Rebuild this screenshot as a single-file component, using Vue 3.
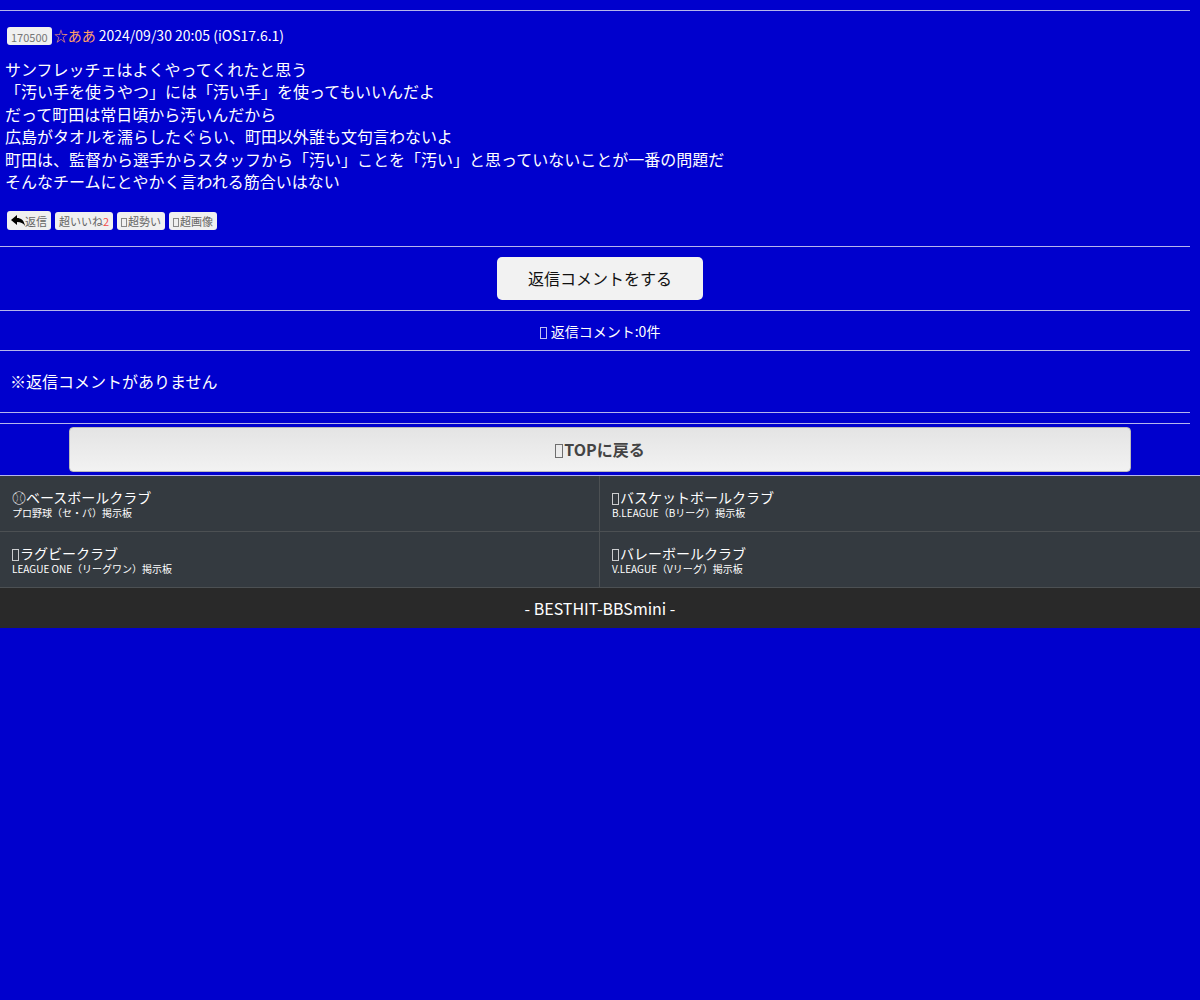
<script setup>
const lines = [
  'サンフレッチェはよくやってくれたと思う',
  '「汚い手を使うやつ」には「汚い手」を使ってもいいんだよ',
  'だって町田は常日頃から汚いんだから',
  '広島がタオルを濡らしたぐらい、町田以外誰も文句言わないよ',
  '町田は、監督から選手からスタッフから「汚い」ことを「汚い」と思っていないことが一番の問題だ',
  'そんなチームにとやかく言われる筋合いはない',
]
const clubs = [
  { icon: '⚾', name: 'ベースボールクラブ', note: 'プロ野球（セ・パ）掲示板' },
  { name: 'バスケットボールクラブ', note: 'B.LEAGUE（Bリーグ）掲示板' },
  { name: 'ラグビークラブ', note: 'LEAGUE ONE（リーグワン）掲示板' },
  { name: 'バレーボールクラブ', note: 'V.LEAGUE（Vリーグ）掲示板' },
]
</script>

<template>
  <div class="page">
    <main>
      <article class="post">
        <header class="meta">
          <a href="#" class="chip number">170500</a>
          <span><span class="author">☆ああ</span> 2024/09/30 20:05 (iOS17.6.1)</span>
        </header>
        <p class="text"><template v-for="(line, i) in lines" :key="i">{{ line }}<br></template></p>
        <div class="actions">
          <button type="button" class="chip reply">
            <svg viewBox="0 0 14 12" width="14" height="12" aria-hidden="true">
              <path d="M0 5 6 0V3C10 3 13 5 14 11C12 8 10 7 6 7V10Z" />
            </svg>返信
          </button>
          <button type="button" class="chip">超いいね<span class="count">2</span></button>
          <button type="button" class="chip"><i class="box small"></i>超勢い</button>
          <button type="button" class="chip"><i class="box small"></i>超画像</button>
        </div>
      </article>
      <section class="compose"><button type="button" class="comment">返信コメントをする</button></section>
      <h2 class="heading"><i class="box"></i> 返信コメント:0件</h2>
      <p class="empty">※返信コメントがありません</p>
      <div class="divider"></div>
    </main>
    <nav class="back"><a href="#" class="top"><i class="box large"></i>TOPに戻る</a></nav>
    <nav class="clubs">
      <a v-for="club in clubs" :key="club.name" href="#" class="club">
        <span class="name"><template v-if="club.icon">{{ club.icon }}</template><i v-else class="box"></i>{{ club.name }}</span>
        <span class="note">{{ club.note }}</span>
      </a>
    </nav>
    <footer class="footer">- BESTHIT-BBSmini -</footer>
  </div>
</template>

<style>
body {
  margin: 0;
  background: #0000cd;
}
</style>

<style scoped>
.page {
  color: #fff;
  font: 16px/24px "Noto Sans CJK JP", sans-serif;
}
.page * {
  box-sizing: border-box;
}
a {
  color: inherit;
  text-decoration: none;
}
button {
  font-family: inherit;
}
main {
  padding-top: 10px;
  margin-right: 10px;
}
.post,
.compose,
.heading,
.empty,
.divider {
  border-top: 1px solid #b5b5ec;
}
.post {
  padding: 14px 5px 16px;
}
.meta {
  display: flex;
  align-items: flex-end;
  gap: 2px;
  height: 20px;
  padding-left: 2px;
  font-size: 14px;
  line-height: 20px;
}
.author {
  color: #ffa066;
}
.chip {
  height: 18px;
  padding: 0 4px;
  border: 0;
  border-radius: 3px;
  background: #f0f0f0;
  color: #666;
  font-size: 11px;
  line-height: 18px;
}
.number {
  color: #777;
  line-height: 20px;
}
.box {
  display: inline-block;
  width: 7px;
  height: 12px;
  margin-right: 1px;
  border: 1px solid;
  vertical-align: -2px;
  opacity: 0.75;
}
.small {
  width: 6px;
  height: 9px;
  vertical-align: -1px;
}
.large {
  width: 8px;
  height: 14px;
}
.text {
  margin: 13px 0 19px;
  line-height: 1.4;
}
.actions {
  display: flex;
  align-items: flex-end;
  gap: 4px;
  padding-left: 2px;
}
.reply {
  display: flex;
  align-items: center;
  height: 19px;
}
.reply svg {
  fill: #000;
}
.count {
  color: #f04b4b;
}
.compose {
  display: flex;
  justify-content: center;
  padding: 10px 0 10px 10px;
}
.comment {
  padding: 9px 31px;
  border: 0;
  border-radius: 5px;
  background: #f2f2f2;
  color: #111;
  font-size: 16px;
  line-height: 25px;
}
.heading {
  margin: 0;
  padding: 10px 0 9px 10px;
  font-size: 14px;
  font-weight: 400;
  line-height: 20px;
  text-align: center;
}
.empty {
  margin: 0;
  padding: 18px 10px 19px;
  border-bottom: 1px solid #b5b5ec;
}
.divider {
  margin-top: 10px;
}
.back {
  display: flex;
  justify-content: center;
  padding: 3px 0;
}
.top {
  width: calc(90% - 18px);
  padding: 9px 0 10px;
  border: 1px solid #bbb;
  border-radius: 4px;
  background: linear-gradient(#e4e4e4, #f2f2f2);
  color: #444;
  font-weight: 700;
  text-align: center;
}
.clubs {
  display: grid;
  grid-template-columns: 1fr 1fr;
  border-top: 1px solid #b5b5ec;
}
.club {
  display: flex;
  flex-direction: column;
  height: 56px;
  padding: 13px 12px;
  border-bottom: 1px solid #4c5053;
  background: #343a40;
}
.club:nth-child(odd) {
  border-right: 1px solid #4c5053;
}
.name {
  font-size: 14px;
  line-height: 17px;
}
.note {
  font-size: 10px;
  line-height: 14px;
}
.footer {
  padding: 8px 0;
  background: #292929;
  text-align: center;
}
</style>
